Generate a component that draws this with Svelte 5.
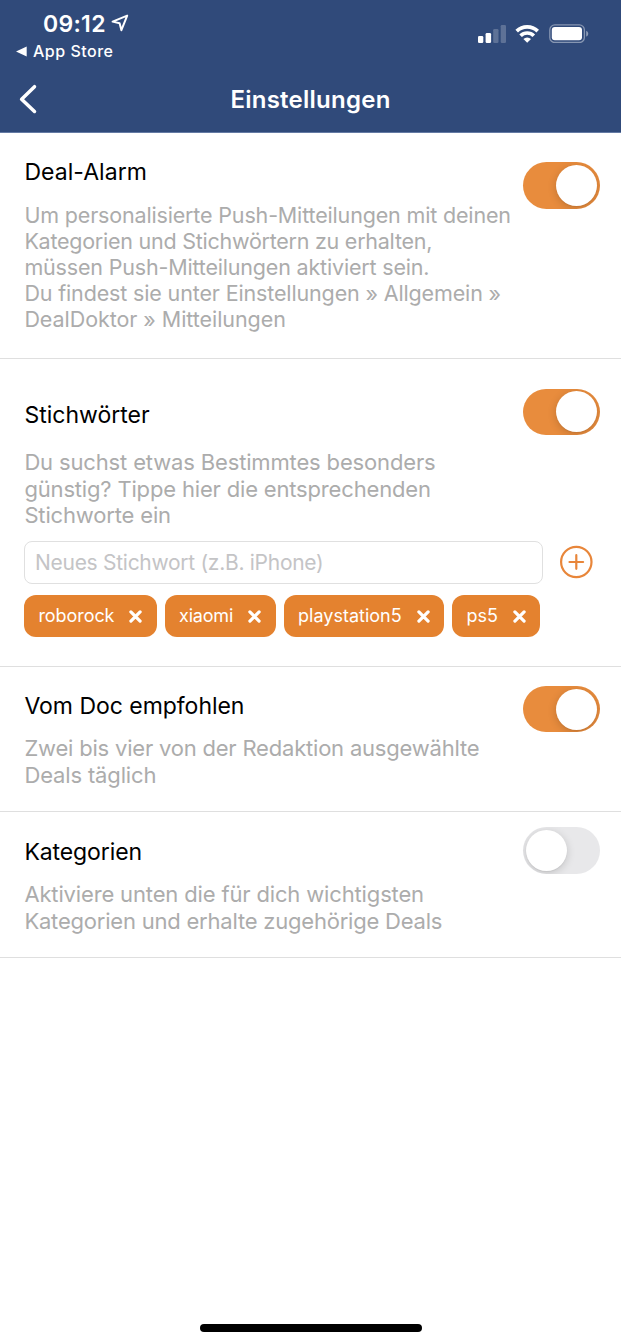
<script>
  const tags = [
    { label: 'roborock', width: 132.7, spacing: -0.06 },
    { label: 'xiaomi', width: 111, spacing: -0.2 },
    { label: 'playstation5', width: 160.5, spacing: 0 },
    { label: 'ps5', width: 88, spacing: -0.1 }
  ];

  let sections = $state([
    {
      id: 'alarm',
      title: 'Deal-Alarm',
      spacing: 0.05,
      on: true,
      lines: [
        ['Um personalisierte Push-Mitteilungen mit deinen', -0.165],
        ['Kategorien und Stichwörtern zu erhalten,', -0.25],
        ['müssen Push-Mitteilungen aktiviert sein.', -0.18],
        ['Du findest sie unter Einstellungen » Allgemein »', -0.145],
        ['DealDoktor » Mitteilungen', -0.06]
      ]
    },
    {
      id: 'keywords',
      title: 'Stichwörter',
      spacing: 0,
      on: true,
      lines: [
        ['Du suchst etwas Bestimmtes besonders', -0.15],
        ['günstig? Tippe hier die entsprechenden', -0.17],
        ['Stichworte ein', -0.16]
      ]
    },
    {
      id: 'doc',
      title: 'Vom Doc empfohlen',
      spacing: -0.03,
      on: true,
      lines: [
        ['Zwei bis vier von der Redaktion ausgewählte', -0.2],
        ['Deals täglich', -0.14]
      ]
    },
    {
      id: 'categories',
      title: 'Kategorien',
      spacing: -0.1,
      on: false,
      lines: [
        ['Aktiviere unten die für dich wichtigsten', -0.15],
        ['Kategorien und erhalte zugehörige Deals', -0.21]
      ]
    }
  ]);
</script>

<main>
  <header>
    <div class="status">
      <div class="left">
        <div class="clock">
          <span>09:12</span>
          <svg width="18" height="18" viewBox="0 0 18 18" fill="none" stroke="#fff" stroke-width="2" stroke-linejoin="round">
            <path d="M16.2 1.6 1.6 7.6l7 1.6 1.8 7z" />
          </svg>
        </div>
        <div class="return">
          <svg width="11" height="11" viewBox="0 0 11 11"><path d="M0 5.5 10.7.4v10.2z" fill="#fff" /></svg>
          <span>App Store</span>
        </div>
      </div>
      <div class="indicators">
        <svg width="28" height="19" viewBox="0 0 28 19" fill="#fff">
          <rect x="0" y="12" width="5.3" height="7" rx="1.3" />
          <rect x="7.6" y="9" width="5.5" height="10" rx="1.3" />
          <g opacity=".22">
            <rect x="15.2" y="5" width="5.3" height="14" rx="1.3" />
            <rect x="22.7" y="1" width="5.3" height="18" rx="1.3" />
          </g>
        </svg>
        <svg class="wifi" width="24" height="19" viewBox="0 0 24 19" fill="none" stroke="#fff" stroke-width="3.7">
          <path d="M1.7 7.1a15 15 0 0 1 21 0" />
          <path d="M5.6 11.7a9.4 9.4 0 0 1 13.2 0" />
          <path d="M12.2 18.8 8.4 15.1a5.4 5.4 0 0 1 7.6 0z" fill="#fff" stroke="none" />
        </svg>
        <svg width="40" height="19" viewBox="0 0 40 19">
          <rect x=".8" y=".9" width="34.6" height="17.6" rx="5" fill="none" stroke="#fff" stroke-opacity=".42" stroke-width="1.3" />
          <rect x="2.8" y="3.1" width="30.2" height="13.2" rx="3" fill="#fff" />
          <path d="M37.2 6.8c1.3.6 2 1.5 2 2.9s-.7 2.3-2 2.9z" fill="#fff" opacity=".45" />
        </svg>
      </div>
    </div>
    <nav>
      <button class="back" aria-label="Zurück">
        <svg width="20" height="30" viewBox="0 0 20 30" fill="none" stroke="#fff" stroke-width="3.5" stroke-linecap="round" stroke-linejoin="round">
          <path d="M15.5 2.7 2.6 15.2l12.9 12.3" />
        </svg>
      </button>
      <h1>Einstellungen</h1>
    </nav>
  </header>

  {#each sections as s (s.id)}
    <section class={s.id}>
      <div class="row">
        <div class="text">
          <h2 style="letter-spacing: {s.spacing}px">{s.title}</h2>
          <p>
            {#each s.lines as [line, spacing]}
              <span style="letter-spacing: {spacing}px">{line}</span>
            {/each}
          </p>
        </div>
        <button class="toggle" class:on={s.on} role="switch" aria-checked={s.on} aria-label={s.title} onclick={() => (s.on = !s.on)}>
          <i></i>
        </button>
      </div>

      {#if s.id === 'keywords'}
        <div class="entry">
          <input type="text" placeholder="Neues Stichwort (z.B. iPhone)" />
          <button class="add" aria-label="Hinzufügen">
            <svg width="34" height="34" viewBox="0 0 34 34" fill="none" stroke="#e8863a" stroke-width="2.2" stroke-linecap="round">
              <circle cx="17.3" cy="17" r="15.2" />
              <path d="M17.3 10.2v13.6M10.5 17h13.6" />
            </svg>
          </button>
        </div>
        <div class="tags">
          {#each tags as t}
            <div class="tag" style="width: {t.width}px">
              <span style="letter-spacing: {t.spacing}px">{t.label}</span>
              <svg width="13" height="13" viewBox="0 0 13 13" stroke="#fff" stroke-width="3.2" stroke-linecap="round">
                <path d="M1.9 1.9l9.2 9.2M11.1 1.9l-9.2 9.2" />
              </svg>
            </div>
          {/each}
        </div>
      {/if}
    </section>
  {/each}

  <div class="home"></div>
</main>

<style>
  :global(body) { margin: 0; background: #fff; }
  main {
    display: flex;
    flex-direction: column;
    box-sizing: border-box;
    width: 621px;
    height: 1344px;
    overflow: hidden;
    background: #fff;
    color: #000;
    font-family: Inter, 'Liberation Sans', sans-serif;
  }
  button { padding: 0; border: 0; background: none; }
  svg { display: block; flex: none; }

  header {
    box-sizing: border-box;
    height: 133px;
    padding-top: 9px;
    background: #304a7a;
    border-bottom: 1px solid #647aa4;
    color: #fff;
  }
  .status { display: flex; justify-content: space-between; height: 75px; }
  .clock { display: flex; height: 28px; padding-left: 43px; font-size: 23px; font-weight: 600; line-height: 30px; letter-spacing: 0.3px; }
  .clock svg { margin: 5px 0 0 5.3px; }
  .return { display: flex; align-items: center; gap: 6px; margin-top: 4px; padding-left: 16px; font-size: 16px; font-weight: 500; line-height: 20px; letter-spacing: 0.5px; }
  .indicators { display: flex; gap: 9px; padding: 15px 32px 0 0; height: 19px; }
  .wifi { margin-right: 1px; }
  nav { display: grid; grid-template-columns: 60px 1fr 60px; height: 30px; align-items: start; }
  .back { justify-self: start; padding-left: 19px; }
  h1 { margin: 0; text-align: center; font-size: 24px; font-weight: 600; line-height: 32px; letter-spacing: 0.25px; }

  section { box-sizing: border-box; padding-left: 24px; border-bottom: 1px solid #dfdfdf; }
  .row { display: flex; justify-content: space-between; padding-right: 21px; }
  .text { width: 490px; padding-left: 0.4px; }
  h2 { margin: 0; font-size: 23px; font-weight: 400; line-height: 28px; }
  p { margin: 14.5px 0 0; font-size: 22px; line-height: 26.5px; color: #acacac; }
  p span { display: block; white-space: nowrap; }

  .alarm { height: 226px; }
  .alarm .text { padding-top: 25px; }
  .alarm p { margin-top: 16px; font-size: 21.5px; line-height: 26px; }
  .alarm .toggle { margin-top: 29px; }
  .keywords { height: 308px; }
  .keywords .text { padding-top: 42px; }
  .keywords p { margin-top: 20px; line-height: 26.7px; }
  .keywords .toggle { margin-top: 29.6px; }
  .doc { height: 145px; }
  .doc .text { padding-top: 25px; }
  .doc p { margin-top: 15px; }
  .doc .toggle { margin-top: 18.8px; }
  .categories { height: 146px; }
  .categories .text { padding-top: 26px; }
  .categories p { margin-top: 15px; }
  .categories .toggle { margin-top: 15px; }

  .toggle {
    display: flex;
    align-items: center;
    box-sizing: border-box;
    flex: none;
    width: 76.6px;
    height: 46.6px;
    padding: 0 3px;
    border-radius: 24px;
    background: #e8e8ea;
    overflow: hidden;
  }
  .toggle i { width: 41px; height: 41px; border-radius: 50%; background: #fff; box-shadow: 0 2px 8px rgba(0, 0, 0, 0.17), 0 1px 1px rgba(0, 0, 0, 0.05); }
  .toggle.on { justify-content: flex-end; background: #e88c3d; }

  .entry { display: flex; align-items: center; gap: 15.5px; height: 43px; margin-top: 11.6px; }
  .add { padding-top: 0.4px; }
  input {
    box-sizing: border-box;
    width: 519px;
    height: 43px;
    padding: 1px 10px 0;
    border: 1px solid #e0e0e0;
    border-radius: 8px;
    outline: 0;
    background: #fff;
    font: 21px Inter, 'Liberation Sans', sans-serif;
    letter-spacing: -0.28px;
  }
  input::placeholder { color: #c4c4c6; opacity: 1; }
  .tags { display: flex; gap: 8px; margin-top: 11.6px; }
  .tag {
    display: flex;
    align-items: center;
    justify-content: space-between;
    box-sizing: border-box;
    height: 42px;
    padding: 0 14.3px 0 14.4px;
    border-radius: 12px;
    background: #e4822f;
    color: #fff;
    font-size: 18px;
    line-height: 22px;
  }

  .home { width: 222px; height: 8px; margin: auto auto 12px 199.5px; border-radius: 4px; background: #000; }
</style>
